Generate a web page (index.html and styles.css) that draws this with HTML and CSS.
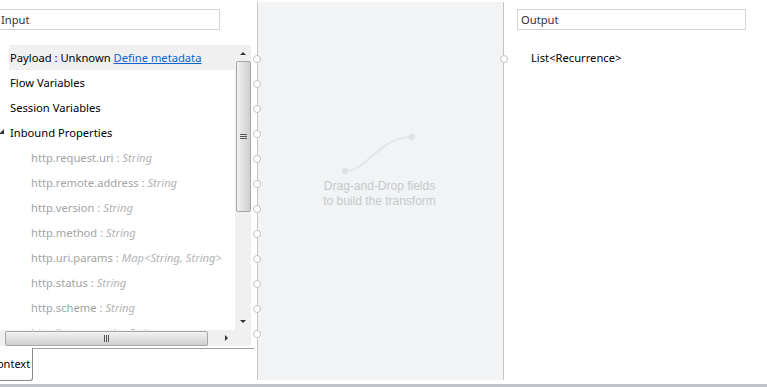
FILE: index.html
```html
<!DOCTYPE html>
<html lang="en">
<head>
    <meta charset="UTF-8">
    <title>Transform</title>
    <link rel="stylesheet" href="styles.css">
</head>
<body>
<div class="editor">
    <div class="pane input-pane">
        <div class="search">Input</div>
        <div class="tree-box">
            <div class="tree-view">
                <ul class="tree">
                    <li class="row selected">Payload : Unknown <a href="#">Define metadata</a></li>
                    <li class="row">Flow Variables</li>
                    <li class="row">Session Variables</li>
                    <li class="row open"><span class="twist"></span>Inbound Properties</li>
                    <li class="row child">http.request.uri : <i>String</i></li>
                    <li class="row child">http.remote.address : <i>String</i></li>
                    <li class="row child">http.version : <i>String</i></li>
                    <li class="row child">http.method : <i>String</i></li>
                    <li class="row child">http.uri.params : <i>Map&lt;String, String&gt;</i></li>
                    <li class="row child">http.status : <i>String</i></li>
                    <li class="row child">http.scheme : <i>String</i></li>
                    <li class="row child">http.listener.path : <i>String</i></li>
                </ul>
                <div class="vscroll">
                    <span class="arrow up"></span>
                    <span class="vthumb"><b></b><b></b><b></b></span>
                    <span class="vtrack"></span>
                    <span class="arrow down"></span>
                </div>
            </div>
            <div class="hscroll">
                <span class="hthumb"><b></b><b></b><b></b></span>
                <span class="arrow right"></span>
                <span class="corner"></span>
            </div>
        </div>
        <div class="tabs">
            <div class="tab">Context</div>
            <div class="tab-rest"></div>
        </div>
    </div>

    <div class="canvas">
        <div class="ports left">
            <span></span><span></span><span></span><span></span><span></span><span></span>
            <span></span><span></span><span></span><span></span><span></span><span></span>
        </div>
        <div class="ports right">
            <span></span>
        </div>
        <div class="hint">
            <svg width="80" height="42" viewBox="0 0 80 42">
                <path d="M7 37 C 30 37, 40 3, 74 3" fill="none" stroke="#e3e5e7" stroke-width="2"/>
                <circle cx="7" cy="37" r="3.2" fill="#dfe1e3"/>
                <circle cx="74" cy="3" r="3.2" fill="#dfe1e3"/>
            </svg>
            <p>Drag-and-Drop fields<br>to build the transform</p>
        </div>
    </div>

    <div class="pane output-pane">
        <div class="search">Output</div>
        <ul class="tree out">
            <li class="row">List&lt;Recurrence&gt;</li>
        </ul>
    </div>
</div>
<div class="statusbar"></div>
</body>
</html>
```

FILE: styles.css
```css
* {
    padding: 0;
    margin: 0;
    list-style: none;
    box-sizing: border-box;
}

html, body {
    width: 767px;
    height: 387px;
    overflow: hidden;
    background: #fff;
}

body {
    font-family: "Noto Sans", "Open Sans", sans-serif;
    font-size: 11.2px;
    color: #000;
}

.editor {
    display: flex;
    height: 384px;
}

/* ---------- panes ---------- */

.pane {
    display: flex;
    flex-direction: column;
    padding-top: 9px;
}

.input-pane {
    width: 257px;
}

.output-pane {
    flex: 1;
    padding-left: 13px;
}

.search {
    height: 21px;
    line-height: 19px;
    border: 1px solid #d4d4d4;
    padding-left: 3px;
    color: #333;
}

.input-pane .search {
    width: 223px;
    margin-left: -3px;
}

.output-pane .search {
    width: 229px;
}

/* ---------- tree ---------- */

.tree-box {
    margin-top: 15px;
    width: 251px;
}

.tree-view {
    display: flex;
    height: 285px;
}

.tree {
    flex: 1;
    overflow: hidden;
}

.row {
    position: relative;
    height: 25px;
    line-height: 26px;
    margin-left: 9px;
    padding-left: 1px;
    white-space: nowrap;
}

.row.selected {
    background: #f0f0f0;
}

.row a {
    color: #0a66cc;
}

.row.child {
    padding-left: 22px;
    color: #a3a3a3;
}

.row i {
    color: #b4b4b4;
}

.twist {
    position: absolute;
    left: -10px;
    top: 9px;
    width: 0;
    height: 0;
    border-left: 5px solid transparent;
    border-bottom: 5px solid #333;
}

.out .row {
    margin-left: 14px;
    margin-top: 15px;
    padding-left: 0;
}

/* ---------- scrollbars ---------- */

.vscroll {
    width: 16px;
    background: #f0f0f0;
    display: flex;
    flex-direction: column;
    align-items: center;
}

.arrow {
    width: 0;
    height: 0;
}

.arrow.up {
    margin: 7px 0 6px;
    border-left: 3px solid transparent;
    border-right: 3px solid transparent;
    border-bottom: 3px solid #333;
}

.arrow.down {
    margin: 6px 0 7px;
    border-left: 3px solid transparent;
    border-right: 3px solid transparent;
    border-top: 3px solid #333;
}

.vthumb {
    width: 15px;
    height: 151px;
    border: 1px solid #a6a6a6;
    border-radius: 2px;
    background: linear-gradient(to right, #f2f2f2, #dcdcdc 60%, #cfcfcf);
    display: flex;
    flex-direction: column;
    align-items: center;
    justify-content: center;
    gap: 1px;
}

.vthumb b {
    width: 7px;
    height: 1px;
    background: #555;
}

.vtrack {
    flex: 1;
}

.hscroll {
    display: flex;
    align-items: center;
    height: 16px;
    background: #f0f0f0;
}

.hthumb {
    margin-left: 5px;
    width: 203px;
    height: 15px;
    border: 1px solid #a6a6a6;
    border-radius: 2px;
    background: linear-gradient(to bottom, #f2f2f2, #dcdcdc 60%, #cfcfcf);
    display: flex;
    align-items: center;
    justify-content: center;
    gap: 1px;
}

.hthumb b {
    width: 1px;
    height: 7px;
    background: #555;
}

.arrow.right {
    margin-left: 17px;
    border-top: 3px solid transparent;
    border-bottom: 3px solid transparent;
    border-left: 3px solid #333;
}

.corner {
    margin-left: auto;
    width: 16px;
    height: 16px;
    background: #f0f0f0;
}

/* ---------- tabs ---------- */

.tabs {
    display: flex;
    margin-top: 2px;
}

.tab {
    width: 34px;
    height: 33px;
    line-height: 32px;
    margin-left: -1px;
    border-right: 1px solid #8c8c8c;
    border-bottom: 1px solid #8c8c8c;
    border-bottom-right-radius: 3px;
    font-size: 11px;
    text-indent: -9px;
    overflow: hidden;
    white-space: nowrap;
}

.tab-rest {
    width: 221px;
    height: 1px;
    background: #a0a0a0;
}

/* ---------- canvas ---------- */

.canvas {
    position: relative;
    width: 247px;
    margin-top: 2px;
    height: 378px;
    background: #f2f3f5;
    border-left: 1px solid #c6c6c6;
    border-right: 1px solid #c6c6c6;
}

.ports span {
    position: absolute;
    width: 8px;
    height: 8px;
    border: 1px solid #c4c4c4;
    border-radius: 50%;
    background: #fff;
}

.ports.left span {
    left: -5px;
}

.ports.right span {
    right: -5px;
    top: 53px;
}

.ports.left span:nth-child(1) { top: 53px; }
.ports.left span:nth-child(2) { top: 78px; }
.ports.left span:nth-child(3) { top: 103px; }
.ports.left span:nth-child(4) { top: 128px; }
.ports.left span:nth-child(5) { top: 153px; }
.ports.left span:nth-child(6) { top: 178px; }
.ports.left span:nth-child(7) { top: 203px; }
.ports.left span:nth-child(8) { top: 228px; }
.ports.left span:nth-child(9) { top: 253px; }
.ports.left span:nth-child(10) { top: 278px; }
.ports.left span:nth-child(11) { top: 303px; }
.ports.left span:nth-child(12) { top: 328px; }

.hint {
    display: flex;
    flex-direction: column;
    align-items: center;
    padding-top: 132px;
    padding-right: 2px;
}

.hint svg {
    margin-right: 3px;
}

.hint p {
    margin-top: 3px;
    font-family: "Liberation Sans", Arial, sans-serif;
    font-size: 12px;
    line-height: 15px;
    text-align: center;
    color: #c5cacc;
}

.statusbar {
    height: 3px;
    background: #c2c3c8;
}
```
